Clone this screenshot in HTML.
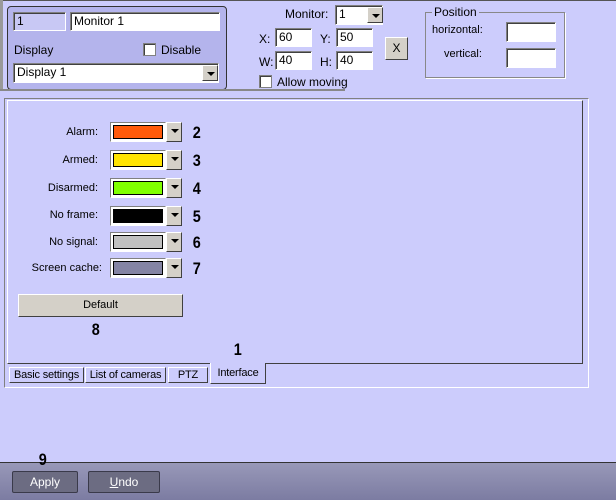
<!DOCTYPE html>
<html><head><style>
*{box-sizing:border-box}
body{margin:0;width:616px;height:502px;background:#ccccfc;font-family:"Liberation Sans",sans-serif;font-size:11px;position:relative;overflow:hidden;color:#000;white-space:nowrap}
.a{position:absolute}
.in{position:absolute;background:#fff;border:1px solid;border-color:#808080 #fff #fff #808080;box-shadow:inset 1px 1px 0 #404040;padding:1px 3px;font-size:12px;line-height:14px}
.dd{position:absolute;width:16px;background:#d4d0c8;border:1px solid;border-color:#fff #404040 #404040 #fff}
.dd:after{content:"";position:absolute;left:4px;top:6px;border-left:4px solid transparent;border-right:4px solid transparent;border-top:4px solid #000}
.cb{position:absolute;width:13px;height:13px;background:#fff;border:1px solid #808080;box-shadow:inset 1px 1px 0 #404040}
.lbl{position:absolute;text-align:right;width:90px;left:8px;font-size:11px}
.sw{position:absolute;left:110px;width:56px;height:20px;border:1px solid;border-color:#808080 #fff #fff #808080;background:#fff;padding:2px}
.sw div{width:100%;height:100%;border:1px solid #000}
.n{position:absolute;font-weight:bold;font-size:17px;transform:scaleX(.85)}
.tab{position:absolute;top:367px;height:16px;border:1px solid;border-color:#fff #404040 #404040 #fff;font-size:11px;text-align:center;line-height:14px;letter-spacing:-.2px}
.btn{position:absolute;top:471px;height:22px;background:#6c6c82;border:1px solid #3a3a4a;border-radius:2px;color:#fff;text-align:center;line-height:20px;font-size:12px}
</style></head><body>
<div class="a" style="left:0;top:0;width:616px;height:1px;background:#555"></div>
<div class="a" style="left:0;top:0;width:3px;height:90px;background:#999"></div>
<div class="a" style="left:7px;top:6px;width:220px;height:84px;border:1px solid #333;border-radius:4px;background:#b4b4ec"></div>
<div class="in" style="left:13px;top:12px;width:53px;height:19px;background:#c8c8f4">1</div>
<div class="in" style="left:70px;top:12px;width:150px;height:19px">Monitor 1</div>
<div class="a" style="left:14px;top:43px;font-size:12px">Display</div>
<div class="cb" style="left:143px;top:43px"></div>
<div class="a" style="left:161px;top:43px;font-size:12px">Disable</div>
<div class="in" style="left:13px;top:63px;width:206px;height:20px">Display 1</div>
<div class="dd" style="left:202px;top:65px;height:16px"></div>
<div class="a" style="left:285px;top:7px;font-size:12px">Monitor:</div>
<div class="in" style="left:335px;top:5px;width:48px;height:20px">1</div>
<div class="dd" style="left:367px;top:7px;height:16px"></div>
<div class="a" style="left:259px;top:32px;font-size:12px">X:</div>
<div class="in" style="left:275px;top:28px;width:37px;height:19px">60</div>
<div class="a" style="left:320px;top:32px;font-size:12px">Y:</div>
<div class="in" style="left:336px;top:28px;width:37px;height:19px">50</div>
<div class="a" style="left:259px;top:55px;font-size:12px">W:</div>
<div class="in" style="left:275px;top:51px;width:37px;height:19px">40</div>
<div class="a" style="left:320px;top:55px;font-size:12px">H:</div>
<div class="in" style="left:336px;top:51px;width:37px;height:19px">40</div>
<div class="a" style="left:385px;top:37px;width:23px;height:23px;background:#d4d0c8;border:1px solid;border-color:#fff #404040 #404040 #fff;text-align:center;line-height:20px;font-size:12px">X</div>
<div class="cb" style="left:259px;top:75px"></div>
<div class="a" style="left:277px;top:75px;font-size:12px">Allow moving</div>
<div class="a" style="left:425px;top:12px;width:140px;height:66px;border:1px solid #888;box-shadow:1px 1px 0 #fff"></div>
<div class="a" style="left:432px;top:5px;background:#ccccfc;padding:0 2px;font-size:12px">Position</div>
<div class="a" style="left:432px;top:24px">horizontal:</div>
<div class="in" style="left:506px;top:22px;width:50px;height:20px"></div>
<div class="a" style="left:444px;top:48px">vertical:</div>
<div class="in" style="left:506px;top:48px;width:50px;height:20px"></div>
<div class="a" style="left:0;top:89px;width:345px;height:2px;background:#888"></div>
<div class="a" style="left:4px;top:98px;width:585px;height:290px;border:1px solid;border-color:#808080 #fff #fff #808080"></div>
<div class="a" style="left:7px;top:100px;width:576px;height:264px;border:1px solid;border-color:#fff #404040 #404040 #fff"></div>
<div class="lbl" style="top:126px">Alarm:</div><div class="sw" style="top:122px"><div style="background:#ff5a0a"></div></div><div class="dd" style="left:166px;top:122px;height:20px"></div><div class="n" style="left:192px;top:123px">2</div>
<div class="lbl" style="top:154px">Armed:</div><div class="sw" style="top:150px"><div style="background:#ffe400"></div></div><div class="dd" style="left:166px;top:150px;height:20px"></div><div class="n" style="left:192px;top:151px">3</div>
<div class="lbl" style="top:182px">Disarmed:</div><div class="sw" style="top:178px"><div style="background:#80ff00"></div></div><div class="dd" style="left:166px;top:178px;height:20px"></div><div class="n" style="left:192px;top:179px">4</div>
<div class="lbl" style="top:209px">No frame:</div><div class="sw" style="top:206px"><div style="background:#000"></div></div><div class="dd" style="left:166px;top:206px;height:20px"></div><div class="n" style="left:192px;top:207px">5</div>
<div class="lbl" style="top:236px">No signal:</div><div class="sw" style="top:232px"><div style="background:#c0c0c0"></div></div><div class="dd" style="left:166px;top:232px;height:20px"></div><div class="n" style="left:192px;top:233px">6</div>
<div class="lbl" style="top:262px;left:10px;width:92px">Screen cache:</div><div class="sw" style="top:258px"><div style="background:#8484a4"></div></div><div class="dd" style="left:166px;top:258px;height:20px"></div><div class="n" style="left:192px;top:259px">7</div>
<div class="a" style="left:18px;top:294px;width:165px;height:23px;background:#d4d0c8;border:1px solid;border-color:#fff #404040 #404040 #fff;text-align:center;line-height:20px;font-size:11px">Default</div>
<div class="n" style="left:91px;top:320px">8</div>
<div class="n" style="left:233px;top:340px">1</div>
<div class="tab" style="left:9px;width:75px">Basic settings</div>
<div class="tab" style="left:85px;width:81px">List of cameras</div>
<div class="tab" style="left:168px;width:40px">PTZ</div>
<div class="tab" style="left:210px;width:56px;top:363px;height:21px;background:#ccccfc;border-top:none;line-height:20px">Interface</div>
<div class="a" style="left:0;top:462px;width:616px;height:38px;background:linear-gradient(#9898b8,#7c7ca2);border-top:1px solid #333"></div>
<div class="a" style="left:0;top:500px;width:616px;height:2px;background:#fff"></div>
<div class="n" style="left:38px;top:450px">9</div>
<div class="btn" style="left:12px;width:66px">Apply</div>
<div class="btn" style="left:88px;width:72px"><u>U</u>ndo</div>
</body></html>
